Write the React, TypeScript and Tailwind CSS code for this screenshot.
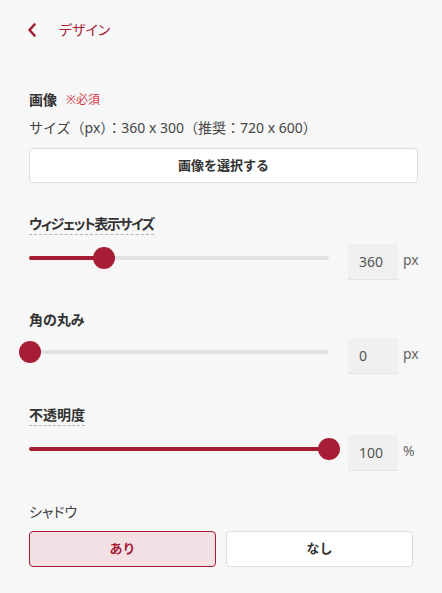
import React from 'react';

const CRIMSON = '#a51c35';

const Slider = ({ pct }: { pct: number }) => (
  <div className="relative h-[28px] w-[300px] shrink-0">
    <div className="absolute left-0 right-0 top-[12px] h-[4px] rounded-full bg-[#e2e2e2]" />
    <div
      className="absolute left-0 top-[12px] h-[4px] rounded-full bg-[#a51c35]"
      style={{ width: `${pct}%` }}
    />
    <div
      className="absolute top-[3px] h-[22px] w-[22px] -translate-x-1/2 rounded-full bg-[#a81d36]"
      style={{ left: `${pct}%` }}
    />
  </div>
);

const SliderRow = ({ pct, value, unit }: { pct: number; value: string; unit: string }) => (
  <div className="flex items-start">
    <Slider pct={pct} />
    <div className="ml-[19px] flex h-[36px] w-[50px] shrink-0 items-center border-b border-[#e3e3e3] bg-[#f0f0f0] pl-[11px] text-[14px] text-[#555]">
      {value}
    </div>
    <span className="ml-[5px] mt-[6px] shrink-0 text-[14px] leading-[20px] text-[#666]">{unit}</span>
  </div>
);

const App = () => {
  return (
    <div
      className="min-h-screen bg-[#f7f7f7] px-[29px] pt-[20px] pb-[20px] text-[#333]"
      style={{ fontFamily: '"Noto Sans", "Noto Sans CJK JP", sans-serif' }}
    >
      {/* Header */}
      <div className="flex h-[20px] items-center">
        <svg width="10" height="14" viewBox="0 0 10 14" className="-ml-[2px]">
          <polyline
            points="7.5,1.5 2.5,7 7.5,12.5"
            fill="none"
            stroke={CRIMSON}
            strokeWidth="2.6"
            strokeLinecap="round"
            strokeLinejoin="round"
          />
        </svg>
        <span className="ml-[22px] text-[14px] leading-[20px] text-[#a51c35] [font-feature-settings:'palt']">
          デザイン
        </span>
      </div>

      {/* 画像 */}
      <div className="mt-[50px] flex items-center leading-[20px]">
        <span className="text-[14px] font-bold text-[#333]">画像</span>
        <span className="ml-[9px] text-[12px] text-[#d63c48]">※必須</span>
      </div>
      <div className="mt-[8px] text-[14px] leading-[20px] text-[#444]">
        サイズ（px）：360 x 300（推奨：720 x 600）
      </div>
      <button className="mt-[10px] flex h-[35px] w-[389px] items-center justify-center rounded-[4px] border border-[#dcdcdc] bg-white text-[13px] font-bold text-[#333]">
        画像を選択する
      </button>

      {/* ウィジェット表示サイズ */}
      <div className="mt-[31px] flex">
        <span className="border-b border-dashed border-[#b5b5b5] text-[14px] font-bold leading-[20px] tracking-[-1.5px] [font-feature-settings:'palt']">
          ウィジェット表示サイズ
        </span>
      </div>
      <div className="mt-[9px]">
        <SliderRow pct={25} value="360" unit="px" />
      </div>

      {/* 角の丸み */}
      <div className="mt-[30px] text-[14px] font-bold leading-[20px] [font-feature-settings:'palt']">角の丸み</div>
      <div className="mt-[8px]">
        <SliderRow pct={0.3} value="0" unit="px" />
      </div>

      {/* 不透明度 */}
      <div className="mt-[31px] flex">
        <span className="border-b border-dashed border-[#b5b5b5] text-[14px] font-bold leading-[20px]">
          不透明度
        </span>
      </div>
      <div className="mt-[9px]">
        <SliderRow pct={100} value="100" unit="%" />
      </div>

      {/* シャドウ */}
      <div className="mt-[31px] text-[14px] leading-[20px] text-[#444] [font-feature-settings:'palt']">シャドウ</div>
      <div className="mt-[9px] grid w-[384px] grid-cols-2 gap-[10px]">
        <button className="flex h-[36px] items-center justify-center rounded-[4px] border border-[#a51c35] bg-[#f3e0e4] text-[13px] font-bold text-[#a51c35]">
          あり
        </button>
        <button className="flex h-[36px] items-center justify-center rounded-[4px] border border-[#dcdcdc] bg-white text-[13px] font-bold text-[#333]">
          なし
        </button>
      </div>
    </div>
  );
};

export default App;
